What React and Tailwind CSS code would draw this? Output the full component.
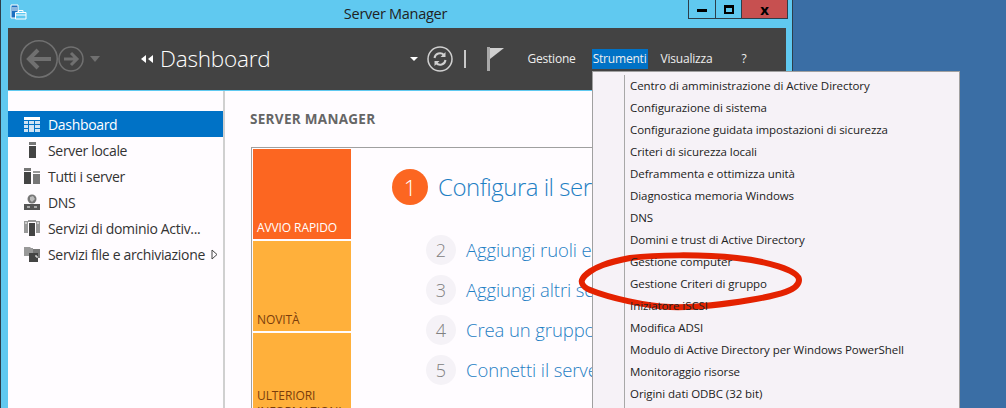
const font = { fontFamily: '"Open Sans", "Noto Sans", sans-serif' };

function AppIcon() {
  return (
    <svg width="18" height="17" viewBox="0 0 18 17" fill="none" className="shrink-0">
      <path d="M1 1h7v13H1z" fill="#1a6fc0" stroke="#fff" />
      <path d="M2 4h5M2 6h5" stroke="#fff" />
      <path d="M5.500 8.500h10.500v6.500H5.500z" fill="#60c9f0" stroke="#fff" />
      <path d="M8.500 8.500V6.500h4.500v2M5.500 11h10.500" stroke="#fff" />
    </svg>
  );
}

function BackIcon({ size, sw }) {
  return (
    <svg width={size} height={size} viewBox="0 0 38 38" fill="none" stroke="#707070">
      <circle cx="19" cy="19" r={19 - sw / 2} strokeWidth={sw} />
      <path d="M31 19H10M18 10l-9 9 9 9" strokeWidth="4" />
    </svg>
  );
}

function ForwardIcon() {
  return (
    <svg width="26" height="26" viewBox="0 0 26 26" fill="none" stroke="#707070">
      <circle cx="13" cy="13" r="12" strokeWidth="1.500" />
      <path d="M6 13h13M13 7l6 6-6 6" strokeWidth="3" />
    </svg>
  );
}

function RefreshIcon() {
  return (
    <svg width="26" height="26" viewBox="0 0 26 26" fill="none" stroke="#d0d0d0">
      <circle cx="13" cy="13" r="12" strokeWidth="1.500" />
      <path d="M7.500 12a5.500 5.500 0 0 1 9.500-3" strokeWidth="2" />
      <path d="M18.500 14a5.500 5.500 0 0 1-9.500 3" strokeWidth="2" />
      <path d="M18.500 6v5h-5z M7.500 20v-5h5z" fill="#d0d0d0" stroke="none" />
    </svg>
  );
}

function FlagIcon() {
  return (
    <svg width="18" height="24" viewBox="0 0 18 24" className="shrink-0">
      <path d="M0 0h3v24H0z" fill="#a8a8a8" />
      <path d="M3 1h14L3 12z" fill="#d0d0d0" />
    </svg>
  );
}

function DashIcon() {
  return (
    <svg width="16" height="15" viewBox="0 0 16 15" fill="#cfe3f4">
      <path d="M0 0h16v3H0z" fill="#fff" />
      <path d="M0 4h4v3H0zM5 4h5v3H5zM11 4h5v3h-5zM0 8h4v3H0zM5 8h5v7H5zM11 8h5v3h-5zM0 12h4v3H0zM11 12h5v3h-5z" />
    </svg>
  );
}

function LocalIcon() {
  return (
    <svg width="16" height="16" viewBox="0 0 16 16">
      <path d="M5 0h7v3H5z" fill="#777" />
      <path d="M5 4h7v12H5z" fill="#444" />
    </svg>
  );
}

function AllIcon() {
  return (
    <svg width="16" height="16" viewBox="0 0 16 16">
      <path d="M0 0h7v3H0z" fill="#777" />
      <path d="M0 4h7v12H0z" fill="#444" />
      <path d="M9 3h7v2H9z" fill="#999" />
      <path d="M9 6h7v10H9z" fill="#777" />
    </svg>
  );
}

function DnsIcon() {
  return (
    <svg width="16" height="16" viewBox="0 0 16 16">
      <circle cx="8" cy="5" r="4.500" fill="#777" />
      <path d="M6 3l3-1 2 3-3 3-2-2z" fill="#bbb" />
      <path d="M0 10h16v6H0z" fill="#555" />
      <path d="M3 12.500h3v1H3zM10 12.500h3v1h-3z" fill="#fff" />
    </svg>
  );
}

function AdIcon() {
  return (
    <svg width="16" height="16" viewBox="0 0 16 16">
      <path d="M0 1h4v12H0zM12 1h4v12h-4z" fill="#999" />
      <path d="M1 3h2M13 3h2" stroke="#fff" />
      <path d="M4 0h8v2H4z" fill="#999" />
      <path d="M5 3h6v13H5z" fill="#444" />
    </svg>
  );
}

function FilesIcon() {
  return (
    <svg width="16" height="16" viewBox="0 0 16 16">
      <path d="M0 1h6l1 1h2v8H0z" fill="#999" />
      <path d="M9 3h7v9H9z" fill="#777" />
      <path d="M5 7h9v9H5z" fill="#444" />
      <path d="M11 10h2v2" stroke="#fff" fill="none" />
    </svg>
  );
}

function Caret() {
  return (
    <svg width="7" height="11" viewBox="0 0 7 11" fill="none" className="ml-[6px] shrink-0">
      <path d="M1 1l5 4.500-5 4.500z" stroke="#444" />
    </svg>
  );
}

const sideItems = [
  { label: "Dashboard", Icon: DashIcon, active: true },
  { label: "Server locale", Icon: LocalIcon },
  { label: "Tutti i server", Icon: AllIcon },
  { label: "DNS", Icon: DnsIcon },
  { label: "Servizi di dominio Activ...", Icon: AdIcon },
  { label: "Servizi file e archiviazione", Icon: FilesIcon, caret: true },
];

const menuItems = [
  "Centro di amministrazione di Active Directory",
  "Configurazione di sistema",
  "Configurazione guidata impostazioni di sicurezza",
  "Criteri di sicurezza locali",
  "Deframmenta e ottimizza unità",
  "Diagnostica memoria Windows",
  "DNS",
  "Domini e trust di Active Directory",
  "Gestione computer",
  "Gestione Criteri di gruppo",
  "Iniziatore iSCSI",
  "Modifica ADSI",
  "Modulo di Active Directory per Windows PowerShell",
  "Monitoraggio risorse",
  "Origini dati ODBC (32 bit)",
];

const steps = [
  ["2", "Aggiungi ruoli e funzionalità"],
  ["3", "Aggiungi altri server da gestire"],
  ["4", "Crea un gruppo di server"],
  ["5", "Connetti il server ai servizi cloud"],
];

export default function App() {
  return (
    <div style={font} className="relative flex h-[408px] w-[1006px] overflow-hidden bg-[#3a6ea5]">
      <div className="flex h-[408px] w-[793px] shrink-0 flex-col border-x border-[#2d3e4a] bg-[#60c9f0] pl-[7px] pr-[6px]">
        {/* title bar */}
        <div className="relative flex h-[28px] shrink-0 items-center justify-center">
          <div className="absolute left-0 top-[4px] ml-[2px]"><AppIcon /></div>
          <span className="mr-[3px] text-[14.500px] tracking-[-0.27px] text-[#222]">Server Manager</span>
          <div className="absolute right-[-2px] top-0 flex h-[19px] border border-t-0 border-[#2d3e4a]">
            <div className="flex w-[27px] items-center justify-center border-r border-[#2d3e4a]"><div className="mt-[3px] h-[3px] w-[10px] bg-black" /></div>
            <div className="flex w-[26px] items-center justify-center border-r border-[#2d3e4a]"><div className="h-[9px] w-[10px] border-2 border-t-[3px] border-black" /></div>
            <div className="flex w-[45px] items-center justify-center bg-[#c75050] text-[15px] font-bold leading-none text-black">x</div>
          </div>
        </div>

        {/* header */}
        <div className="flex h-[62px] shrink-0 items-center bg-[#434343] pl-[12px] text-white">
          <BackIcon size={38} sw={1.500} />
          <ForwardIcon />
          <div className="ml-[6px] h-0 w-0 border-x-[5px] border-t-[6px] border-x-transparent border-t-[#707070]" />
          <div className="ml-[41px] flex items-center gap-[2px]">
            <div className="h-0 w-0 border-y-[4px] border-r-[5px] border-y-transparent border-r-white" />
            <div className="h-0 w-0 border-y-[4px] border-r-[5px] border-y-transparent border-r-white" />
          </div>
          <span className="ml-[7px] text-[22.500px] font-light tracking-[-0.2px]">Dashboard</span>
          <div className="ml-[140px] h-0 w-0 border-x-[4px] border-t-[4px] border-x-transparent border-t-white" />
          <div className="ml-[9px]"><RefreshIcon /></div>
          <div className="ml-[11px] h-[18px] w-[2px] bg-[#c8c8c8]" />
          <div className="ml-[21px]"><FlagIcon /></div>
          <span className="ml-[22px] text-[12px] tracking-[-0.2px] text-[#eee]">Gestione</span>
          <span className="ml-[16px] bg-[#0072c6] px-px py-px text-[12px] tracking-[-0.2px] text-[#eee]">Strumenti</span>
          <span className="ml-[13px] text-[12px] tracking-[-0.2px] text-[#eee]">Visualizza</span>
          <span className="ml-[29px] text-[12px] text-[#eee]">?</span>
        </div>

        {/* body */}
        <div className="mt-px flex min-h-0 flex-1 overflow-hidden bg-[#fffcff]">
          <div className="w-[217px] shrink-0 border-r-2 border-[#d0d0d0] pt-[20px]">
            {sideItems.map(({ label, Icon, active, caret }) => (
              <div
                key={label}
                className={`flex h-[26px] items-center pl-[16px] ${active ? "bg-[#0072c6] text-white" : "text-[#333]"}`}
              >
                <span className="flex w-[24px] shrink-0"><Icon /></span>
                <span className="whitespace-nowrap pt-px text-[14px] tracking-[-0.32px]">{label}</span>
                {caret && <Caret />}
              </div>
            ))}
          </div>

          <div className="min-w-0 flex-1 pl-[25px] pt-[18px]">
            <div className="text-[13.500px] font-bold tracking-[0.3px] text-[#666]">SERVER MANAGER</div>
            <div className="ml-px mt-[18px] flex h-[300px] border border-[#a0a0a0] pl-px pt-px">
              <div className="flex w-[98px] shrink-0 flex-col gap-[2px]">
                <div className="flex h-[90px] shrink-0 items-end bg-[#fc6621] px-[4px] pb-[3px] text-[12px] leading-[16px] tracking-[-0.1px] text-white">AVVIO RAPIDO</div>
                <div className="flex h-[90px] shrink-0 items-end bg-[#ffb03b] px-[4px] pb-[3px] text-[12px] leading-[16px] tracking-[-0.1px] text-[#7a3d0c]">NOVITÀ</div>
                <div className="flex h-[90px] shrink-0 items-end bg-[#ffb03b] px-[4px] pb-[3px] text-[12px] leading-[16px] tracking-[-0.1px] text-[#7a3d0c]">ULTERIORI INFORMAZIONI</div>
              </div>
              <div className="min-w-0 flex-1 overflow-hidden pl-[41px] pt-[20px]">
                <div className="flex items-center gap-[10px] whitespace-nowrap">
                  <div className="flex h-[36px] w-[36px] shrink-0 items-center justify-center rounded-full bg-[#fc6621] text-[22px] font-light text-white">1</div>
                  <span className="text-[24px] font-light tracking-[-0.5px] text-[#1f80c4]">Configura il server locale</span>
                </div>
                <div className="ml-[34px] mt-[30px] flex flex-col gap-[10px]">
                  {steps.map(([n, t]) => (
                    <div key={n} className="flex items-center gap-[10px] whitespace-nowrap">
                      <div className="flex h-[30px] w-[30px] shrink-0 items-center justify-center rounded-full bg-[#f5f2f7] text-[18px] font-light text-[#808080]">{n}</div>
                      <span className="text-[18.500px] font-light tracking-[-0.1px] text-[#1f80c4]">{t}</span>
                    </div>
                  ))}
                </div>
              </div>
            </div>
          </div>
        </div>
      </div>

      {/* dropdown menu */}
      <div className="absolute left-[592px] top-[71px] h-[350px] w-[368px] border border-[#a0a0a0] bg-[#f6f2f7] pl-[31px] pt-[3px]">
        <div className="h-full border-l border-[#a8a8a8] pl-[5px]">
          {menuItems.map((item) => (
            <div key={item} className="relative z-20 flex h-[22px] items-center whitespace-nowrap text-[11.500px] tracking-[-0.065px] text-[#222]">{item}</div>
          ))}
        </div>
      </div>

      {/* red hand-drawn ellipse */}
      <svg className="pointer-events-none absolute left-[575px] top-[248px] z-10" width="235" height="68" viewBox="0 0 235 68" fill="none">
        <path
          d="M55 10C80 7 125 6 162 10C190 13 224 22 224 32C224 42 205 47 175 52C145 57 120 60 95 59C70 58 35 50 15 42C8 39 6 35 7 32C9 26 20 20 28 17C36 14 45 12 55 10Z"
          stroke="#e42200"
          strokeWidth="6"
        />
      </svg>
    </div>
  );
}
